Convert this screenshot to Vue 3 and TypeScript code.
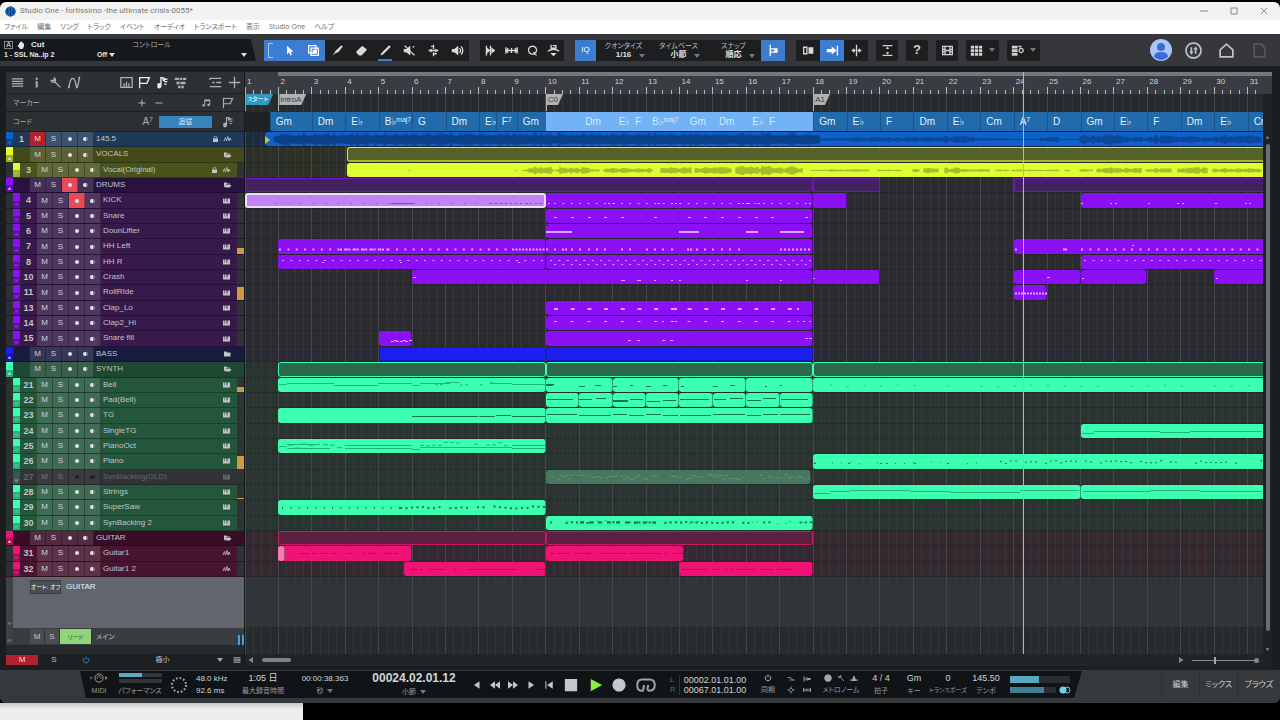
<script setup lang="ts">
import { h, ref } from 'vue'

const VIEW = 30.46
const END = 1 + VIEW
const pct = (bar: number) => ((bar - 1) / VIEW) * 100 + '%'
const span = (a: number, b: number) => ({ left: pct(a), width: ((b - a) / VIEW) * 100 + '%' })

type Glyph = { s?: string; f?: string }
const glyphs: Record<string, Glyph> = {
  cursor: { f: 'M5 2v10.5l2.5-2.3 1.7 3.8 1.8-.8-1.7-3.7H13z' },
  range: { s: 'M2 2h9v9H2zM5 5h9v9H5z', f: 'M7 7h5v5H7z' },
  knife: { f: 'M2 14l4-6 7-6.5 1.5 1.5L9 10l-3 1z' },
  eraser: { f: 'M2 9l6-6q1-1 2 0l4 3q1 1 0 2l-6 6H5l-3-3q-1-1 0-2z' },
  pen: { f: 'M2 14l1-3L12.500 1.500l2 2L5 13z' },
  mute: { s: 'M2 2l12 12M12 4l2-1M12 12l2 1', f: 'M1 6h3l5-4v12l-5-4H1z' },
  bend: { s: 'M2 8h12M8 1v5M8 10v5M5 3h3M8 12h4M5 6v4M11 6v4' },
  listen: { s: 'M10.500 5q2.500 3 0 6M12.500 3q4 5 0 10', f: 'M1 6h3l5-4v12l-5-4H1z' },
  play2: { s: 'M3 2v12M8 2v12', f: 'M3 4l5 4-5 4zM9 4l5 4-5 4z' },
  stretch: { s: 'M1 4v8M15 4v8M2 8h12M4 5L1.500 8 4 11M12 5l2.500 3L12 11M8 5v6' },
  q: { s: 'M8 2.500a5 5 0 1 0 .01 0M9 10l4 4' },
  macro: { s: 'M1 9q7-5 14 0M5 1v4h6V2H7', f: 'M4 11h8l-4 4z' },
  snap: { s: 'M4 1v14M4 6h9M4 10h9', f: 'M9 6h4v4H9z' },
  split: { s: 'M2 4h4v8H2z', f: 'M8 4h6v8H8zM10 8l3-2v4z' },
  follow: { s: 'M14 2v12', f: 'M1 6h6V3l6 5-6 5v-3H1z' },
  center: { s: 'M8 1v14M2 8h4M10 8h4', f: 'M4 5l3 3-3 3zM12 5L9 8l3 3z' },
  fit: { s: 'M2 2h12M2 14h12M8 4v2M8 10v2', f: 'M6 6l2-3 2 3zM6 10l2 3 2-3z' },
  film: { s: 'M2 3h12v10H2zM5 3v10M11 3v10M2 6.500h3M2 9.500h3M11 6.500h3M11 9.500h3M5 8h6' },
  grid: { f: 'M1 2h4v3.500H1zM6 2h4v3.500H6zM11 2h4v3.500h-4zM1 6.500h4V10H1zM6 6.500h4V10H6zM11 6.500h4V10h-4zM1 11h4v3.500H1zM6 11h4v3.500H6zM11 11h4v3.500h-4z' },
  panel: { s: 'M12.500 5.500a2.500 2.500 0 1 0 .01 0', f: 'M1 2h7v3.500H1zM1 6.500h7V10H1zM1 11h7v3.500H1zM9 2h4v2H9z' },
  menu: { s: 'M1 3.500h14M1 6.500h14M1 9.500h14M1 12.500h14' },
  info: { f: 'M7 2h2.500v2.500H7zM7 6h2.500v8H7z' },
  wrench: { s: 'M7 7l7 7M2 5.500h4.500V2.500Q9 4 7.500 7 5 9 2 5.500' },
  curve: { s: 'M1 14Q3 2 6 3t4 9 4-10', f: 'M0 12h2v3H0zM13 1h2v2h-2z' },
  keys: { s: 'M1 2h14v12H1zM5 9v5M8 7v7M11 9v5' },
  flag: { s: 'M2 15V2h12l-3 7H2' },
  chord: { s: 'M6 13V2h3M10 4h4M10 7h4M10 10h3', f: 'M2 12a2.500 2 0 1 0 4 0a2.500 2 0 1 0-4 0M8 2h3v4H8z' },
  arr: { f: 'M1 2h5v3H1zM7 2h3v3H7zM11 2h4v3h-4zM3 7h4v3H3zM8 7h6v3H8zM5 12h3v3H5zM9 12h3v3H9z' },
  list: { s: 'M1 3h14M1 13h14M4 8h3M9 8h6M1 3v2' },
  plus: { s: 'M8 1v14M1 8h14' },
  minus: { s: 'M1 8h14' },
  note: { s: 'M6 12V3h8v8', f: 'M2 12a2 2 0 1 0 4 0a2 2 0 1 0-4 0M10 11a2 2 0 1 0 4 0a2 2 0 1 0-4 0M6 3h8v2H6z' },
  midi: { f: 'M1 3h3v6h1V3h2v6h1V3h2v6h1V3h4v10H1z' },
  wave: { s: 'M1 12l3-7 2 7 3-9 2 9 2-6 2 5' },
  lock: { s: 'M5 7V4.500q3-4 6 0V7', f: 'M3 7h10v7H3z' },
  open: { f: 'M1 3h5l1 2h6v2H5l-2 5H1zM5 8h11l-3 5H3z' },
  shut: { f: 'M1 3h5l1 2h7v8H1z' },
  auto: { s: 'M2 13L6 4l4 8 4-9' },
  home: { s: 'M2 7.500L8 2l6 5.500V14H2z' },
  page: { s: 'M3 2h7l3 4v8H3z' },
  swap: { s: 'M8 1a7 7 0 1 0 .01 0M6 5v5M10 11V6', f: 'M4 9h4l-2 3zM8 7h4l-2-3z' },
  power: { s: 'M5 3.500a5.500 5.500 0 1 0 6 0M8 1v6' },
  back: { f: 'M12 2v12L3 8z' },
  rew: { f: 'M8 2v12L0 8zM16 2v12L8 8z' },
  ffwd: { f: 'M8 2v12l8-6zM0 2v12l8-6z' },
  fwd: { f: 'M4 2v12l9-6z' },
  start: { s: 'M3 2v12', f: 'M14 2v12L5 8z' },
  stop: { f: 'M1 1h14v14H1z' },
  play: { f: 'M2 1v14l13-7z' },
  rec: { f: 'M8 .5a7.500 7.500 0 1 0 .01 0' },
  loop: { s: 'M5.500 12.500H4Q1 12.500 1 8t4-4.500h6q4 0 4 4.500t-4 4.500Q8 12.500 10 8M6.500 8l-1 5' },
  pre: { s: 'M1 5h6l4 5h4M5 10h8' },
  punch: { s: 'M2 2v12M2 8h12M8 4v8', f: 'M9 6h6v4H9z' },
  gear: { s: 'M8 4.500a3.500 3.500 0 1 0 .01 0M8 1v3M8 12v3M1 8h3M12 8h3' },
  tri: { f: 'M8 2l5 12H3zM1 10h2v4H1zM13 10h2v4h-2z' },
  din: { s: 'M8 1.500a6.500 6.500 0 1 0 .01 0M8 3v3M4 8h2M10 8h2M5 5l1 1M11 5l-1 1' },
}
const Icon = (p: { name: string }) => {
  const g = glyphs[p.name]
  return h('svg', { viewBox: '0 0 16 16', 'aria-hidden': 'true' }, [
    g.s ? h('path', { d: g.s, fill: 'none', stroke: 'currentColor', 'stroke-width': 1.6 }) : null,
    g.f ? h('path', { d: g.f, fill: 'currentColor' }) : null,
  ])
}
Icon.props = ['name']

const menus = ['ファイル', '編集', 'ソング', 'トラック', 'イベント', 'オーディオ', 'トランスポート', '表示', 'Studio One', 'ヘルプ']
const tools = [['cursor', '矢印'], ['range', '範囲'], ['knife', '分割'], ['eraser', '消しゴム'], ['pen', 'ペイント'], ['mute', 'ミュート'], ['bend', 'ベンド'], ['listen', '試聴']]
const tools2 = [['play2', 'タブ'], ['stretch', 'ストレッチ'], ['q', 'クオンタイズ適用'], ['macro', 'マクロ']]

type Clip = [number, number, string?]
type Track = { n?: string; name: string; g: string; kind: 'top' | 'folder' | 'child' | 'idle'; icon: string; lock?: boolean; m?: boolean; r?: boolean; meter?: number; clips: Clip[] }
const tracks: Track[] = [
  { n: '1', name: '145.5', g: 'tempo', kind: 'top', icon: 'wave', lock: true, m: true, clips: [[1.6, END]] },
  { name: 'VOCALS', g: 'vocal', kind: 'folder', icon: 'open', clips: [[4.05, END]] },
  { n: '3', name: 'Vocal(Original)', g: 'vocal', kind: 'child', icon: 'wave', lock: true, clips: [[4.05, END]] },
  { name: 'DRUMS', g: 'drum', kind: 'folder', icon: 'open', r: true, clips: [[1, 18], [18, 20], [24, END]] },
  { n: '4', name: 'KICK', g: 'drum', kind: 'child', icon: 'midi', r: true, clips: [[1, 10, 'selected'], [10, 18], [18, 19], [26, END]] },
  { n: '5', name: 'Snare', g: 'drum', kind: 'child', icon: 'midi', clips: [[10, 18]] },
  { n: '6', name: 'DounLifter', g: 'drum', kind: 'child', icon: 'midi', clips: [[10, 18]] },
  { n: '7', name: 'HH Left', g: 'drum', kind: 'child', icon: 'midi', meter: 42, clips: [[2, 10], [10, 18], [24, END]] },
  { n: '8', name: 'HH R', g: 'drum', kind: 'child', icon: 'midi', clips: [[2, 10], [10, 18], [26, END]] },
  { n: '10', name: 'Crash', g: 'drum', kind: 'child', icon: 'midi', clips: [[6, 18], [18, 20], [24, 26], [26, 28], [30, END]] },
  { n: '11', name: 'RollRIde', g: 'drum', kind: 'child', icon: 'midi', meter: 90, clips: [[24, 25]] },
  { n: '13', name: 'Clap_Lo', g: 'drum', kind: 'child', icon: 'midi', clips: [[10, 18]] },
  { n: '14', name: 'Clap2_Hi', g: 'drum', kind: 'child', icon: 'midi', clips: [[10, 18]] },
  { n: '15', name: 'Snare fill', g: 'drum', kind: 'child', icon: 'midi', clips: [[5, 6], [10, 18]] },
  { name: 'BASS', g: 'bass', kind: 'folder', icon: 'shut', clips: [[5, 10], [10, 18]] },
  { name: 'SYNTH', g: 'synth', kind: 'folder', icon: 'open', clips: [[2, 10], [10, 18], [18, END]] },
  { n: '21', name: 'Bell', g: 'synth', kind: 'child', icon: 'midi', meter: 32, clips: [[2, 10], [10, 12], [12, 14], [14, 16], [16, 18], [18, END]] },
  { n: '22', name: 'Pad(Bell)', g: 'synth', kind: 'child', icon: 'midi', clips: [10, 11, 12, 13, 14, 15, 16, 17].map((b): Clip => [b, b + 1]) },
  { n: '23', name: 'TG', g: 'synth', kind: 'child', icon: 'midi', clips: [[2, 10], [10, 18]] },
  { n: '24', name: 'SingleTG', g: 'synth', kind: 'child', icon: 'midi', clips: [[26, END]] },
  { n: '25', name: 'PianoOct', g: 'synth', kind: 'child', icon: 'midi', clips: [[2, 10]] },
  { n: '26', name: 'Piano', g: 'synth', kind: 'child', icon: 'midi', meter: 90, clips: [[18, END]] },
  { n: '27', name: 'SynBacking(OLD)', g: 'synth', kind: 'idle', icon: 'midi', clips: [[10, 17.94, 'muted']] },
  { n: '28', name: 'Strings', g: 'synth', kind: 'child', icon: 'midi', meter: 10, clips: [[18, 26], [26, END]] },
  { n: '29', name: 'SuperSaw', g: 'synth', kind: 'child', icon: 'midi', clips: [[2, 10]] },
  { n: '30', name: 'SynBacking 2', g: 'synth', kind: 'child', icon: 'midi', clips: [[10, 18]] },
  { name: 'GUITAR', g: 'guitar', kind: 'folder', icon: 'open', clips: [[2, 10], [10, 18]] },
  { n: '31', name: 'Guitar1', g: 'guitar', kind: 'child', icon: 'wave', clips: [[2, 6], [2, 2.2, 'head'], [10, 14.13]] },
  { n: '32', name: 'Guitar1 2', g: 'guitar', kind: 'child', icon: 'wave', clips: [[5.75, 10], [14, 18]] },
]

const chords: [number, number, string, string?][] = [
  [1.74, 3, 'Gm'], [3, 4, 'Dm'], [4, 5, 'E♭'], [5, 6, 'B♭', 'maj7'], [6, 7, 'G'], [7, 8, 'Dm'], [8, 8.5, 'E♭'], [8.5, 9.13, 'F', '7'], [9.13, 10, 'Gm'],
  [10, 11, ''], [11, 12, 'Dm'], [12, 12.5, 'E♭'], [12.5, 13, 'F'], [13, 14.13, 'B♭', 'maj7'], [14.13, 15, 'Gm'], [15, 16, 'Dm'], [16, 16.5, 'E♭'], [16.5, 18, 'F'],
  [18, 19, 'Gm'], [19, 20, 'E♭'], [20, 21, 'F'], [21, 22, 'Dm'], [22, 23, 'E♭'], [23, 24, 'Cm'], [24, 25, 'A', '7'], [25, 26, 'D'], [26, 27, 'Gm'], [27, 28, 'E♭'], [28, 29, 'F'], [29, 30, 'Dm'], [30, 31, 'E♭'], [31, END, 'Cm'],
]
const markers: [number, string, string][] = [[1, 'スタート', 'go'], [2, 'introA', ''], [10, 'C0', ''], [18, 'A1', '']]
const bars = Array.from({ length: 31 }, (_, i) => i + 1)
const beats = Array.from({ length: 122 }, (_, i) => ({ bar: 1 + i / 4, main: i % 4 === 0 }))

/* Note strokes, in the coordinates of the arrangement canvas. */
const run = (a: number, b: number, step: number, y: number, w = 2) => {
  let d = ''
  for (let x = a; x < b; x += step) d += `M${x.toFixed(1)} ${y}h${w}`
  return d
}
const at = (y: number, w: number, xs: number[]) => xs.map((x) => `M${x} ${y}h${w}`).join('')
const seg = (list: [number, number, number][]) => list.map(([a, b, y]) => `M${a} ${y}H${b}`).join('')
const B = 8.355
const rnd = (i: number) => {
  const v = Math.sin(i * 12.9898) * 43758.5453
  return v - Math.floor(v)
}
const scatter = (a: number, b: number, step: number, y: number, dy: number, w: number, keep: number) => {
  let d = ''
  for (let x = a, i = a; x < b; x += step, i++) if (rnd(i) < keep) d += `M${x.toFixed(1)} ${(y + (rnd(i + 7) - 0.5) * dy).toFixed(1)}h${w}`
  return d
}
const wave = (y: number, parts: [number, number, number][]) => {
  let d = ''
  for (const [a, b, amp] of parts)
    for (let x = a; x < b; x += 1) {
      const e = Math.max(0.5, amp * (0.45 + 0.55 * rnd(Math.floor(x / 3))) * (0.7 + 0.3 * rnd(x)))
      d += `M${x} ${(y - e).toFixed(1)}V${(y + e).toFixed(1)}`
    }
  return d
}
const strokes: { c: string; d: string; w: number }[] = [
  { c: 'n-kick', w: 1, d: run(275, 545, 12.6, 203.5, 1) + run(490, 545, 5, 203.5) + seg([[391, 414, 203.5]]) },
  {
    c: 'n-drum', w: 1,
    d: run(554, 812, B, 203.5) + at(203.5, 2, [548, 608, 613, 658, 675, 742, 748, 758, 809, 1081, 1110, 1115, 1148, 1177, 1182, 1215, 1245, 1249]) +
      at(217.5, 3, [554, 571, 588, 604, 621, 654, 688, 704, 721, 738, 755, 771, 805]) +
      run(282, 546, B, 260.5) + at(262.5, 2, [322, 400, 518]) + run(550, 812, B, 260.5) + run(554, 812, B, 264.5) + run(1084, 1262, B, 260.5) +
      at(277.5, 3, [413, 1047]) + at(280.500, 4, [621, 637]) + at(280.5, 2, [654, 671, 679, 746, 780]) + at(278.5, 2, [813, 1082, 1216]) +
      run(554, 800, 16.7, 321.5, 3) + at(321.5, 2, [662, 671, 675, 797, 803, 809]) +
      at(340.500, 3, [628, 637, 662, 670]) + at(338.500, 3, [805, 809]) + at(341.5, 3, [391, 396, 400, 405]) + at(340.5, 3, [394, 403, 409]) + at(245.5, 2, [1132]),
  },
  {
    c: 'n-drum', w: 2,
    d: seg([[546, 572, 232], [679, 699, 232], [746, 758, 232], [780, 804, 232]]) + run(279, 512, B, 249.5, 2) + run(340, 390, 4.2, 249.5, 2) + run(512, 548, 3.4, 249.5, 2) +
      at(249.5, 2, [554, 562, 565, 571, 579, 588, 596, 604, 621, 629, 646, 654, 662, 671, 687, 690, 696, 704, 712, 721, 729, 738, 1015, 1063, 1065]) +
      run(780, 812, 4, 249.5) + run(1081, 1262, B, 249.5) + run(1015, 1046, 3, 293.5, 2) + run(554, 800, 16.7, 309, 4) + at(309, 2, [671, 675, 797]),
  },
  {
    c: 'n-synth', w: 1,
    d: seg([[279, 287, 384.5], [287, 334, 383.5], [334, 378, 385.5], [378, 412, 383.5], [412, 420, 385.5], [420, 450, 383.5], [446, 460, 382.5], [490, 512, 383.5], [512, 546, 384.5]]) +
      scatter(430, 512, 5, 384, 3, 3, 0.7) +
      seg([[279, 287, 446.5], [287, 320, 444.5], [287, 330, 448.5], [345, 412, 445.5], [345, 412, 448.5], [412, 420, 449.5], [420, 512, 447.5], [512, 546, 445.5], [512, 546, 448.5]]) +
      scatter(288, 345, 7, 446, 4, 5, 0.8) + scatter(420, 510, 6, 444, 4, 4, 0.8) +
      scatter(830, 1262, 16.7, 386, 2, 2, 0.8) + seg([[1082, 1094, 433.5], [1094, 1160, 431.5], [1160, 1190, 432.5], [1190, 1262, 431.5]]) +
      seg([[814, 830, 493.5], [830, 850, 491.5], [850, 910, 490.5], [910, 950, 491.5], [950, 1020, 492.5], [1020, 1079, 490.5], [1083, 1150, 491.5], [1150, 1200, 490.5], [1200, 1262, 491.5]]) +
      scatter(550, 812, 4.200, 522.5, 4, 2, 0.4),
  },
  {
    c: 'n-dark', w: 1,
    d: seg([[546, 554, 384.5], [546, 553, 385.5], [579, 585, 386.5], [595, 601, 385.5], [613, 617, 386.5], [630, 633, 385.5], [646, 651, 386.5], [663, 667, 385.5], [681, 684, 386.5], [713, 718, 386.5], [730, 735, 385.5], [765, 767, 386.5], [780, 782, 385.5]]) +
      seg([[547, 573, 399.5], [579, 592, 399.5], [596, 606, 398.5], [613, 628, 400.5], [613, 628, 401.5], [630, 643, 399.5], [647, 660, 401.5], [663, 676, 400.5], [680, 709, 399.5], [714, 726, 399.5], [730, 743, 398.5], [747, 761, 400.5], [763, 776, 398.5], [781, 808, 399.5]]) +
      seg([[412, 478, 416.5], [479, 495, 416.5], [496, 511, 415.5], [512, 546, 416.5], [547, 577, 414.5], [579, 611, 415.5], [613, 627, 414.5], [629, 644, 415.5], [646, 661, 414.5], [663, 678, 415.5], [680, 711, 415.5], [713, 745, 414.5], [747, 761, 415.5], [763, 778, 414.5], [780, 810, 414.5]]) +
      at(463.5, 2, [814, 848, 880, 886, 914, 947]) + scatter(980, 1262, 5, 462, 3, 2, 0.6) + scatter(814, 980, 9, 463, 2, 1, 0.7),
  },
  { c: 'n-dark', w: 2, d: run(282, 400, B, 508, 1) + scatter(400, 546, 5.5, 507.5, 2, 2, 0.8) + scatter(550, 812, 5.200, 522.5, 1, 2, 0.75) + run(580, 660, 9, 522.5, 4) },
  { c: 'n-muted', w: 1, d: scatter(550, 808, 2.5, 477, 5, 3, 0.7) },
  { c: 'n-vocal', w: 1, d: wave(170.5, [[409, 411, 0.5], [515, 517, 0.5], [523, 528, 1], [528, 553, 4], [553, 560, 1.500], [560, 590, 4], [590, 600, 1.5], [604, 630, 3], [630, 653, 2.500], [661, 692, 4], [695, 703, 3], [703, 732, 4.5], [736, 782, 5], [782, 803, 4.5], [811, 830, 1], [830, 870, 1.5], [878, 902, 1], [913, 920, 2], [924, 939, 3], [945, 960, 3.500], [960, 990, 1.500], [996, 1010, 1], [1012, 1060, 1], [1065, 1070, 1], [1080, 1093, 1.5], [1097, 1142, 3], [1146, 1172, 2.5], [1178, 1208, 4], [1213, 1262, 2.5]]) },
  { c: 'n-tempo', w: 1, d: wave(139.5, [[274, 280, 5], [280, 818, 7.5], [818, 850, 2], [850, 905, 3], [905, 945, 3], [945, 975, 4], [975, 1010, 1.5], [1010, 1040, 1], [1040, 1060, 3], [1060, 1080, 1], [1080, 1125, 5.5], [1125, 1147, 3], [1147, 1195, 5], [1195, 1215, 3], [1215, 1262, 5]]) },
  { c: 'n-guitar', w: 1, d: scatter(300, 398, 2, 553.5, 0, 3, 0.5) + scatter(548, 590, 2, 553.5, 0, 3, 0.6) + scatter(596, 682, 2, 553.5, 0, 3, 0.8) + scatter(408, 455, 2, 569.5, 0, 3, 0.6) + scatter(468, 516, 2, 569.5, 0, 3, 0.8) + scatter(535, 545, 2, 569.5, 0, 3, 0.8) + scatter(682, 790, 2, 569.5, 0, 3, 0.6) },
]

const quantize = ref('1/16')
const timebase = ref('小節')
const snap = ref('順応')
const moves = [['back', '戻る', 'sm'], ['rew', '巻き戻し', 'sm'], ['ffwd', '早送り', 'sm'], ['fwd', '進む', 'sm'], ['start', '先頭へ', 'sm'], ['stop', '停止', 'st'], ['play', '再生', 'pl'], ['rec', '録音', 'rc'], ['loop', 'ループ', 'lp']]
</script>

<template>
  <div class="desk">
    <div class="window">
      <header class="title">
        <svg class="logo" viewBox="0 0 16 16" aria-hidden="true"><path d="M8 0l6 3 2 5-2 5-6 3-6-3-2-5 2-5z" fill="#1268b8" /><path d="M4 4v6M8 3v4M8 9v5M12 5v7" stroke="#082d60" stroke-width="1.5" /></svg>
        <h1>Studio One - fortissimo -the ultimate crisis-0055*</h1>
        <div class="winbtns">
          <button aria-label="最小化"><svg viewBox="0 0 8 8"><path d="M0 4h8" /></svg></button>
          <button aria-label="最大化"><svg viewBox="0 0 8 8"><path d="M1 1h6v6H1z" /></svg></button>
          <button aria-label="閉じる"><svg viewBox="0 0 8 8"><path d="M1 1l6 6M7 1L1 7" /></svg></button>
        </div>
      </header>
      <nav class="menu"><button v-for="m in menus" :key="m">{{ m }}</button></nav>

      <div class="toolbar">
        <div class="plugin">
          <div class="line"><span class="abox">A</span><svg class="hand" viewBox="0 0 16 16"><path d="M4 8V4h2V2h2V1h2v2h2v2h2v6l-3 5H6L1 9l1-1z" fill="currentColor" /></svg><b>Cut</b><span class="ctl">コントロール</span></div>
          <div class="line"><b class="ssl">1 - SSL Na..ip 2</b><button class="offbtn">Off <i class="dn"></i></button><button class="more" aria-label="メニュー"><i class="dn"></i></button></div>
        </div>
        <div class="group first">
          <span class="bracket"></span>
          <button v-for="([i, l], k) in tools" :key="i" :aria-label="l" :class="{ on: k < 2, marked: k === 4 }"><Icon :name="i" class="ic" /></button>
        </div>
        <div class="group narrow"><button v-for="[i, l] in tools2" :key="i" :aria-label="l"><Icon :name="i" class="ic" /></button></div>
        <div class="group">
          <button class="on iq">IQ</button>
          <label class="pick"><span>クオンタイズ</span><select v-model="quantize"><option>1/16</option></select><i class="dn"></i></label>
          <label class="pick"><span>タイムベース</span><select v-model="timebase"><option>小節</option></select><i class="dn"></i></label>
          <label class="pick"><span>スナップ</span><select v-model="snap"><option>順応</option></select><i class="dn"></i></label>
          <button class="on" aria-label="スナップ切替"><Icon name="snap" class="ic" /></button>
        </div>
        <div class="group">
          <button aria-label="自動スクロール"><Icon name="split" class="ic" /></button>
          <button class="on" aria-label="追従"><Icon name="follow" class="ic" /></button>
          <button aria-label="中央"><Icon name="center" class="ic" /></button>
        </div>
        <div class="singles">
          <button aria-label="高さ"><Icon name="fit" class="ic" /></button>
          <button class="help">?</button>
          <button aria-label="ビデオ"><Icon name="film" class="ic" /></button>
          <button class="wide" aria-label="グリッド"><Icon name="grid" class="ic" /><i class="dn"></i></button>
          <button class="wide" aria-label="パネル"><Icon name="panel" class="ic" /><i class="dn"></i></button>
        </div>
        <div class="account">
          <button aria-label="アカウント"><svg class="face" viewBox="0 0 22 22"><circle cx="11" cy="11" r="11" fill="#a9c5f8" /><circle cx="11" cy="8" r="4" fill="#3d6bd5" /><path d="M4 18q0-5 7-5t7 5q-7 6-14 0" fill="#3d6bd5" /></svg></button>
          <button aria-label="転送"><Icon name="swap" class="big" /></button>
          <button aria-label="ホーム"><Icon name="home" class="big" /></button>
          <button class="dim" aria-label="ページ"><Icon name="page" class="big" /></button>
        </div>
      </div>

      <main class="main">
        <section class="panel">
          <div class="ptools">
            <button aria-label="リスト"><Icon name="menu" class="ic" /></button><button aria-label="情報"><Icon name="info" class="ic" /></button><button aria-label="設定"><Icon name="wrench" class="ic" /></button><button aria-label="オートメーション"><Icon name="curve" class="ic" /></button>
            <span class="mid">
              <button aria-label="ルーラー"><Icon name="keys" class="ic" /></button><button class="lit" aria-label="マーカー"><Icon name="flag" class="ic" /></button><button class="lit" aria-label="コード"><Icon name="chord" class="ic" /></button><button aria-label="アレンジ"><Icon name="arr" class="ic" /></button>
            </span>
            <button aria-label="レイアウト"><Icon name="list" class="ic" /></button><button aria-label="追加"><Icon name="plus" class="ic" /></button>
          </div>
          <div class="lane marker"><span>マーカー</span><button aria-label="追加"><Icon name="plus" class="xs" /></button><button aria-label="削除"><Icon name="minus" class="xs" /></button><Icon name="note" class="nt" /><Icon name="flag" class="md" /></div>
          <div class="lane"><span>コード</span><em>A<sup>7</sup></em><button class="track-on">追従</button><Icon name="chord" class="md" /></div>
          <ol class="tracks">
            <li v-for="t in tracks" :key="t.name + t.n" :class="['track', t.g, t.kind]">
              <span class="strip"><Icon v-if="t.kind === 'folder'" name="fwd" class="tiny up" /><Icon v-else name="auto" class="tiny" /></span>
              <span class="num">{{ t.n }}</span>
              <button :class="{ red: t.m }">M</button><button>S</button><button :class="{ rec: t.r }" aria-label="録音待機"><i class="dot"></i></button><button aria-label="モニター"><i class="half"></i></button>
              <span class="name">{{ t.name }}</span>
              <Icon v-if="t.lock" name="lock" class="ti" /><Icon :name="t.icon" class="ti last" />
              <span v-if="t.kind === 'child' || t.kind === 'idle'" class="meter"><i v-if="t.meter" :style="{ height: t.meter + '%' }"></i></span>
            </li>
          </ol>
          <div class="detail"><span class="edge"><Icon name="auto" class="tiny" /></span><button>オート: オフ</button><b>GUITAR</b></div>
          <div class="master"><span class="edge"><Icon name="auto" class="tiny" /></span><button>M</button><button>S</button><button class="read">リード</button><span class="mname">メイン</span><i class="lvl"></i></div>
          <div class="spare"></div>
          <div class="foot"><button class="red">M</button><button>S</button><button class="blue" aria-label="有効"><Icon name="power" class="xs" /></button><button class="size">極小</button><i class="dn"></i><Icon name="menu" class="xs" /></div>
        </section>

        <section class="timeline">
          <div class="ruler">
            <i class="loopbar" :style="{ left: pct(2) }"></i>
            <svg class="ticks"><line v-for="b in beats" :key="b.bar" :x1="pct(b.bar)" :x2="pct(b.bar)" :y1="b.main ? 15 : 18" y2="22" /></svg>
            <span v-for="b in bars" :key="b" :style="{ left: pct(b) }">{{ b }}</span>
          </div>
          <div class="mlane">
            <svg class="gridlines"><line v-for="b in beats" :key="b.bar" :class="{ main: b.main }" :x1="pct(b.bar)" :x2="pct(b.bar)" y1="0" y2="100%" /></svg>
            <span v-for="m in markers" :key="m[1]" :class="['mark', m[2]]" :style="{ left: pct(m[0]) }"><b>{{ m[1] }}</b></span>
          </div>
          <div class="clane"><span v-for="(c, i) in chords" :key="i" :class="['chord', { pale: c[0] >= 10 && c[0] < 18 }]" :style="span(c[0], c[1])">{{ c[2] }}<sup v-if="c[3]">{{ c[3] }}</sup></span></div>
          <div class="canvas">
            <div v-for="t in tracks" :key="t.name + t.n" :class="['row', t.g]"></div>
            <svg class="gridlines"><line v-for="b in beats" :key="b.bar" :class="{ main: b.main }" :x1="pct(b.bar)" :x2="pct(b.bar)" y1="0" y2="100%" /></svg>
            <div class="cliprows">
              <div v-for="t in tracks" :key="t.name + t.n" :class="['cliprow', t.g, t.kind]"><i v-for="(c, i) in t.clips" :key="i" :class="['clip', c[2], { open: c[1] === END }]" :style="span(c[0], c[1])"></i></div>
            </div>
            <svg class="notes" viewBox="245 132 1018 445" preserveAspectRatio="none">
              <path class="loud" d="M275 136.500l6-1H820v8H281l-6-1z" />
              <path class="spark" d="M265 136l5 4-5 4z" />
              <path v-for="(s, i) in strokes" :key="i" :class="s.c" :stroke-width="s.w" :d="s.d" />
            </svg>
          </div>
          <div class="below d1"><svg class="gridlines"><line v-for="b in beats" :key="b.bar" :class="{ main: b.main }" :x1="pct(b.bar)" :x2="pct(b.bar)" y1="0" y2="100%" /></svg></div>
          <div class="below d2"><svg class="gridlines"><line v-for="b in beats" :key="b.bar" :class="{ main: b.main }" :x1="pct(b.bar)" :x2="pct(b.bar)" y1="0" y2="100%" /></svg></div>
          <div class="hscroll"><Icon name="back" class="xs" /><i class="thumb"></i><Icon name="fwd" class="xs far" /><input type="range" min="0" max="100" value="36" aria-label="ズーム" /><i class="end"></i></div>
          <i class="playhead" :style="{ left: pct(24.28) }"></i>
        </section>
        <aside class="vscroll"><i class="cap"></i><Icon name="fwd" class="tiny up" /><i class="vthumb"></i><Icon name="fwd" class="tiny down" /></aside>
      </main>

      <footer class="transport">
        <div class="deck">
          <div class="cell w34"><span class="midi"><i></i><Icon name="din" class="sm" /><i class="hot"></i></span><small>MIDI</small></div>
          <div class="cell w48"><span class="perf"><i class="p"></i><i></i></span><small>パフォーマンス</small></div>
          <div class="cell w30"><svg class="ring" viewBox="0 0 18 18"><circle cx="9" cy="9" r="7" /></svg></div>
          <div class="cell w42 left"><span>48.0 kHz</span><span>92.6 ms</span></div>
          <div class="cell w54"><span>1:05 日</span><small>最大録音時間</small></div>
          <div class="cell w70"><span>00:00:38.363</span><small>秒 <i class="dn"></i></small></div>
          <div class="cell w108"><strong>00024.02.01.12</strong><small>小節 <i class="dn"></i></small></div>
          <div class="moves"><button v-for="[i, l, c] in moves" :key="i" :class="c" :aria-label="l"><Icon :name="i" class="mv" /></button></div>
          <div class="loc"><div class="lr"><b>L</b><b>R</b></div><div class="nums"><span>00002.01.01.00</span><span>00067.01.01.00</span></div></div>
          <div class="cell w24"><Icon name="power" class="xs" /><small>同期</small></div>
          <div class="quad"><Icon name="pre" class="xs" /><Icon name="punch" class="xs" /><Icon name="gear" class="xs" /><Icon name="stretch" class="xs" /></div>
          <div class="cell w46"><span class="trio"><Icon name="rec" class="xs" /><Icon name="wrench" class="xs" /><Icon name="tri" class="xs" /></span><small>メトロノーム</small></div>
          <div class="cell w34"><span>4 / 4</span><small>拍子</small></div>
          <div class="cell w32"><span>Gm</span><small>キー</small></div>
          <div class="cell w36"><span>0</span><small>トランスポーズ</small></div>
          <div class="cell w40"><span>145.50</span><small>テンポ</small></div>
          <div class="levels"><i class="a"></i><i class="b"></i><svg viewBox="0 0 12 8"><circle cx="4" cy="4" r="3.500" fill="#6fd0e6" /><circle cx="8" cy="4" r="3" fill="none" stroke="#6fd0e6" /></svg></div>
        </div>
        <nav class="views"><button>編集</button><button>ミックス</button><button>ブラウズ</button></nav>
      </footer>
    </div>
    <div class="backdrop"><i></i></div>
  </div>
</template>

<style>
body { margin: 0; background: #000; }
</style>

<style scoped>
.desk { display: flex; flex-direction: column; height: 100vh; min-height: 600px; background: #000; color: #c3c6c8; font: 8px/10px "Liberation Sans", "Noto Sans CJK JP", sans-serif; overflow: hidden; }
.desk *, .desk *::before { box-sizing: border-box; }
button, select { font: inherit; color: inherit; background: none; border: 0; padding: 0; margin: 0; }
.desk * { font-feature-settings: "palt"; }
button { display: flex; align-items: center; justify-content: center; white-space: nowrap; }
svg { display: block; flex: none; }
.ic { width: 13px; height: 13px; }
.xs { width: 8px; height: 8px; }
.sm { width: 10px; height: 10px; }
.md { width: 14px; height: 12px; }
.big { width: 17px; height: 17px; }
.tiny { width: 5px; height: 5px; }
.up { transform: rotate(-90deg); }
.down { transform: rotate(90deg); }
.dn { display: inline-block; border: 3px solid transparent; border-top: 4px solid #a3a6a8; border-bottom: 0; }
.window { flex: 1; display: flex; flex-direction: column; min-height: 0; background: #1b1e20; border-radius: 6px; margin-top: 2px; overflow: hidden; }
.title { display: flex; align-items: center; height: 18px; background: #f3f2f2; color: #77797b; padding: 0 12px 0 5px; }
.logo { width: 11px; height: 11px; margin-right: 4px; }
.title h1 { margin: 0; font: 8px/14px Roboto, sans-serif; }
.winbtns { margin-left: auto; display: flex; gap: 22px; }
.winbtns svg { width: 8px; height: 8px; fill: none; stroke: #8a8a8a; }
.menu { display: flex; align-items: center; gap: 9px; height: 14px; background: #fff; color: #6c6e70; padding-left: 4px; font: 7px/12px "Open Sans", "Noto Sans CJK JP", sans-serif; }
.toolbar { display: flex; align-items: center; height: 32px; background: #35373a; padding-right: 4px; margin-bottom: 6px; }
.plugin { width: 256px; height: 22px; background: #15191d; clip-path: polygon(0 0, 98% 0, 100% 100%, 0 100%); padding: 1px 4px; color: #e3e5e6; }
.line { display: flex; align-items: center; height: 10px; }
.abox { border: 1px solid #888; width: 9px; height: 8px; font-size: 7px; line-height: 6px; text-align: center; }
.hand { width: 8px; height: 8px; margin: 0 6px 0 4px; }
.ctl { margin-left: 88px; color: #a5a8aa; font-size: 7px; }
.ssl { width: 93px; font-size: 7px; }
.offbtn { gap: 2px; font-weight: bold; font-size: 7px; }
.offbtn .dn, .more .dn { border-top-color: #dfe1e2; }
.more { margin-left: auto; margin-right: 5px; }
.group { display: flex; align-items: stretch; height: 21px; background: #1c1e20; margin-right: 11px; border-radius: 1px; color: #d8dadb; }
.group + .singles { margin-left: -3px; }
.first { margin-left: 8px; }
.group button { width: 24px; position: relative; }
.narrow button { width: 21px; }
.group .iq { width: 21px; }
.group .on { background: #3c7dd2; color: #fff; }
.marked::after { content: ""; position: absolute; left: 5px; right: 5px; bottom: 0; height: 2px; background: #3c7dd2; }
.bracket { width: 13px; background: #3c7dd2; padding: 3px 4px; display: flex; }
.bracket::before { content: ""; flex: 1; border: 1px solid #a6caf5; border-right: 0; }
.pick { position: relative; display: flex; flex-direction: column; align-items: center; width: 55px; color: #bcbfc1; padding-top: 1px; }
.pick span { font-size: 7px; line-height: 9px; }
.pick select { appearance: none; width: 40px; height: 11px; text-align: center; font-weight: bold; font-size: 8px; line-height: 10px; color: #dfe1e2; }
.pick .dn { position: absolute; right: 6px; bottom: 3px; border-top-color: #777; }
.singles { display: flex; gap: 8px; }
.singles button { width: 22px; height: 21px; background: #1c1e20; border-radius: 2px; color: #cfd1d2; }
.singles .wide { width: 33px; gap: 6px; }
.wide .dn { border-top-color: #777; }
.singles .help { font-size: 13px; font-weight: bold; }
.account { display: flex; margin-left: auto; color: #bfc2c4; }
.account button { width: 33px; }
.account .dim { color: #55585b; }
.face { width: 22px; height: 22px; }

.main { flex: 1; display: flex; padding: 0 8px 0 6px; min-height: 0; }
.panel { width: 239px; display: flex; flex-direction: column; background: #2c3033; border-right: 1px solid #15181a; }
.ptools { display: flex; height: 22px; padding-left: 2px; color: #aeb1b3; background: #2e3134; border-bottom: 1px solid #1d2022; }
.ptools button { width: 19px; }
.mid { display: flex; margin: 0 17px 0 33px; }
.mid button { width: 18px; }
.mid .lit { color: #eceeef; }
.lane { display: flex; align-items: center; height: 20px; padding: 0 9px 0 7px; color: #aaadaf; border-bottom: 1px solid #1d2022; }
.lane.marker { height: 18px; }
.lane > span { flex: 1; font-size: 7px; }
.lane em { font-style: normal; font-size: 10px; margin-right: 6px; }
sup { font-size: 7px; line-height: 0; vertical-align: 3px; }
.marker button { width: 17px; color: #d6d8d9; }
.nt { width: 10px; height: 10px; margin: 0 10px 0 34px; }
.track-on { width: 53px; height: 12px; background: #3784bd; color: #dcecf7; margin-right: 9px; font-size: 7px; }
.tracks { flex: 1; display: flex; flex-direction: column; list-style: none; margin: 0; padding: 0; min-height: 0; }
.track { flex: 1; display: flex; align-items: stretch; min-height: 0; border-bottom: 1px solid rgba(0, 0, 0, .28); color: #c2c4c6; background: var(--bg); }
.tempo { --c: #0f62cc; --bg: #1f3a59; --fold: #1f3a59; --row: #1c2c3a; }
.vocal { --c: #e0ff33; --bg: #49541c; --fold: #414a18; --row: #2c3027; }
.drum { --c: #8b10f5; --bg: #371a4b; --fold: #2a1240; --row: #2c2b30; }
.bass { --c: #1c1ff0; --bg: #181c40; --fold: #171b3e; --row: #292c34; }
.synth { --c: #3dffb2; --bg: #24563c; --fold: #1d4833; --row: #2a3430; }
.guitar { --c: #f01274; --bg: #471530; --fold: #3a0c25; --row: #33292e; }
.track.folder { background: var(--fold); }
.track.idle { background: #303235; color: #64676a; }
.strip { flex: none; width: 7px; background: linear-gradient(transparent 52%, rgba(0, 0, 0, .3) 52%), var(--c); display: flex; align-items: flex-end; justify-content: center; padding-bottom: 1px; color: rgba(255, 255, 255, .7); }
.child .strip, .idle .strip { box-shadow: -7px 0 #2c3033; }
.child, .idle { padding-left: 7px; }
.cliprow.child, .cliprow.idle { padding-left: 0; }
.child .strip .tiny, .top .strip .tiny { opacity: .5; }
.idle .strip { background: #35594b; }
.num { flex: none; width: 17px; text-align: center; font-weight: bold; font-size: 9px; line-height: 14px; }
.track button { flex: none; width: 16px; background: rgba(255, 255, 255, .13); border-right: 1px solid rgba(0, 0, 0, .3); color: #d0d2d3; }
.idle button { background: rgba(255, 255, 255, .05); color: #73767a; }
.track button.red, .foot .red { background: #b3202e; color: #f3dcdc; }
.track button.rec { background: #e84a56; }
.dot { width: 4px; height: 4px; border-radius: 50%; background: #e2e4e5; }
.half { width: 5px; height: 4px; border-radius: 2px; background: linear-gradient(90deg, #e2e4e5 55%, #85888a 55%); }
.idle .dot, .idle .half { background: #222; }
.name { line-height: 14px; padding-left: 2px; flex: 1; white-space: nowrap; }
.ti { width: 9px; height: 8px; align-self: center; margin-right: 3px; }
.last { margin-right: 6px; }
.top .last, .folder .last { margin-right: 12px; }
.meter { width: 7px; background: #303336; display: flex; align-items: flex-end; }
.meter i { width: 100%; background: #cd9a3d; }
.detail { display: flex; align-items: flex-start; height: 51px; background: #62666c; color: #f1f2f3; }
.edge { align-self: stretch; width: 7px; background: #3e4247; display: flex; align-items: flex-end; justify-content: center; color: #999; padding-bottom: 2px; }
.detail button { width: 31px; height: 14px; margin: 3px 0 0 17px; background: #4a4e53; border: 1px solid #3a3d41; font-size: 6px; }
.detail b { margin: 5px 0 0 5px; font-weight: normal; }
.master { display: flex; align-items: center; height: 17px; background: #393d40; }
.master .edge { margin-right: 17px; }
.master button { width: 15px; height: 15px; background: #4b4e51; border-right: 1px solid #303336; }
.master .read { width: 32px; background: #92d47b; color: #2f5a25; font-size: 6px; }
.mname { margin-left: 4px; flex: 1; font-size: 7px; }
.lvl { width: 6px; height: 10px; align-self: flex-end; background: linear-gradient(90deg, #4aa0d8 2px, #234 2px, #234 4px, #4aa0d8 4px); }
.spare { height: 9px; background: #272a2d; }
.foot { display: flex; align-items: center; height: 12px; background: #1d2022; padding-right: 3px; }
.foot button { width: 32px; height: 10px; }
.foot .blue { color: #3f90dd; }
.foot .size { flex: 1; padding-left: 6px; font-size: 7px; }
.foot .dn { margin-right: 10px; }

.timeline { flex: 1; position: relative; display: flex; flex-direction: column; min-width: 0; }
.ruler { position: relative; height: 22px; background: #393c43; }
.loopbar { position: absolute; top: 0; right: -9px; height: 4px; background: #75777a; }
.ticks, .gridlines, .notes { position: absolute; inset: 0; width: 100%; height: 100%; overflow: hidden; }
.ticks line { stroke: #b8babd; shape-rendering: crispEdges; }
.ruler span { position: absolute; top: 5px; padding-left: 2px; color: #d0d2d4; }
.gridlines line { stroke: #34383a; shape-rendering: crispEdges; }
.gridlines line.main { stroke: #43484a; }
.mlane { position: relative; height: 18px; background: #272b2e; }
.mark { position: absolute; top: 0; height: 17px; border-left: 1px solid #b3b5b6; color: #3b3d3f; }
.mark b { display: block; font-weight: normal; background: #b0b2b3; height: 11px; line-height: 11px; padding: 0 5px 0 1px; clip-path: polygon(0 0, 100% 0, calc(100% - 5px) 100%, 0 100%); }
.mark.go { border-color: #52b2d4; color: #fff; }
.mark.go b { background: #3299bd; font-size: 6px; }
.clane { position: relative; height: 20px; background: #1f2326; overflow: hidden; }
.chord { position: absolute; top: 0; height: 19px; background: #216aab; border-left: 1px solid #1b5588; padding-left: 5px; font-size: 10px; line-height: 19px; color: #e6f0f8; white-space: nowrap; overflow: hidden; font-family: "Liberation Sans", "DejaVu Sans", sans-serif; }
.chord.pale { background: #71b3f4; border-color: #71b3f4; color: #d9ebfc; }
.canvas { position: relative; flex: 1; display: flex; flex-direction: column; min-height: 0; overflow: hidden; background: #2b2d30; }
.row { flex: 1; background: var(--row); border-bottom: 1px solid rgba(0, 0, 0, .18); }
.cliprows { position: absolute; inset: 0; display: flex; flex-direction: column; }
.cliprow { position: relative; flex: 1; }
.clip { position: absolute; top: 0; bottom: 1px; background: var(--c); border-radius: 3px; border-right: 1px solid rgba(0, 0, 0, .35); }
.clip.open { border-top-right-radius: 0; border-bottom-right-radius: 0; border-right: 0; }
.folder .clip { border: 1px solid var(--c); background: #42235f; }
.drum.folder .clip { border-color: #7412cf; }
.folder .clip.open { border-right: 0; }
.vocal.folder .clip { background: #54622a; border-color: #d6f03a; border-bottom: 2px solid #9fbd2a; }
.synth.folder .clip { background: #2c684c; }
.guitar.folder .clip { background: #5c2040; border-color: #d01765; }
.bass.folder .clip { background: #1c1ff0; border-color: #171ac0; }
.clip.selected { background: #bf83f4; border: 2px solid #f0dcfb; }
.clip.muted { background: #48775f; }
.clip.head { background: #f77bb8; }
.notes path { fill: none; }
.notes .loud { fill: #0b408c; }
.notes .spark { fill: #b8c93a; }
.n-kick { stroke: #8448bd; }
.n-drum { stroke: #dca8ff; }
.n-synth { stroke: #20b878; }
.n-dark { stroke: #12784a; }
.n-muted { stroke: #5d9279; }
.n-vocal { stroke: #93a824; }
.n-tempo { stroke: #0b408c; }
.n-guitar { stroke: #b00c55; }
.below { position: relative; }
.d1 { height: 51px; background: #303538; border-bottom: 1px solid #282c2f; }
.d2 { height: 26px; background: #272b2e; }
.hscroll { display: flex; align-items: center; height: 12px; padding: 0 4px 0 2px; color: #85888a; background: #212528; }
.thumb { width: 29px; height: 4px; border-radius: 2px; background: #808385; margin-left: 7px; }
.far { margin-left: auto; margin-right: 7px; }
.hscroll input { appearance: none; width: 62px; height: 8px; margin: 0; background: linear-gradient(#85888a, #85888a) center / 100% 1px no-repeat; }
.hscroll input::-webkit-slider-thumb { appearance: none; width: 2px; height: 7px; background: #a6a8aa; }
.end { width: 5px; height: 5px; border-radius: 50%; background: #85888a; }
.playhead { position: absolute; top: 0; bottom: 12px; width: 1px; background: #b4b7b9; }
.vscroll { width: 9px; display: flex; flex-direction: column; align-items: center; background: #1e2224; color: #85888a; padding-bottom: 14px; }
.cap { align-self: stretch; height: 22px; background: #393c43; border-top: 4px solid #75777a; margin-bottom: 41px; }
.vthumb { flex: 1; width: 4px; border-radius: 2px; background: #6d7072; margin: 4px 0 16px; }

.transport { display: flex; height: 37px; padding: 1px 0 5px; background: #35393c; border-top: 4px solid #1c1f21; justify-content: space-between; }
.deck { display: flex; margin-left: 80px; padding: 0 8px 0 2px; background: #111416; clip-path: polygon(0 0, 100% 0, calc(100% - 8px) 100%, 6px 100%); height: 27px; }
.cell { display: flex; flex-direction: column; align-items: center; justify-content: space-evenly; color: #d3d5d6; white-space: nowrap; flex: none; }
.cell span { font-size: 9px; line-height: 11px; }
.cell small { font-size: 7px; line-height: 11px; color: #96999b; }
.cell.left { align-items: flex-start; padding-left: 2px; }
.cell.left span { font-size: 8px; }
.cell .dn { border-top-color: #777; margin-left: 2px; }
.cell strong { font-size: 12px; line-height: 13px; }
.w24 { width: 24px; } .w30 { width: 30px; } .w32 { width: 32px; } .w34 { width: 34px; } .w36 { width: 36px; } .w40 { width: 40px; } .w42 { width: 42px; } .w46 { width: 46px; } .w48 { width: 48px; } .w54 { width: 54px; } .w70 { width: 70px; } .w108 { width: 108px; }
.w70 span { font-size: 8px; }
.w36 small { font-size: 6px; }
.midi { display: flex; align-items: center; gap: 1px; }
.midi .sm { color: #999; }
.midi i { border: 2px solid transparent; border-left: 3px solid #555; border-right: 0; }
.midi .hot { border-left-color: #e0603a; }
.perf { display: flex; flex-direction: column; gap: 2px; }
.perf i { width: 43px; height: 4px; background: #303538; }
.perf .p { background: linear-gradient(90deg, #5da9c8 54%, #303538 54%); }
.ring { width: 18px; height: 18px; fill: none; stroke: #aeb0b2; stroke-width: 2; stroke-dasharray: 1.700 2; }
.moves { display: flex; align-items: center; color: #c5c7c8; }
.moves .sm { width: 18px; height: 20px; }
.sm .mv { width: 10px; height: 10px; }
.moves .st { width: 26px; }
.moves .pl { width: 24px; color: #8af03e; }
.moves .rc { width: 22px; }
.moves .lp { width: 32px; color: #a0a3a5; }
.st .mv, .pl .mv, .rc .mv { width: 14px; height: 14px; }
.lp .mv { width: 22px; height: 20px; }
.loc { width: 94px; display: flex; align-items: center; padding-left: 8px; gap: 4px; font-size: 9px; line-height: 10px; color: #d3d5d6; }
.lr, .nums { display: flex; flex-direction: column; }
.lr { color: #35708f; border-right: 1px solid #33383b; padding-right: 3px; font-size: 8px; }
.lr b { font-weight: normal; }
.quad { width: 38px; display: grid; grid-template-columns: 8px 8px; gap: 3px 8px; place-content: center; color: #a4a7a9; }
.trio { display: flex; gap: 5px; color: #a4a7a9; }
.levels { width: 68px; padding: 5px 4px; position: relative; display: flex; flex-direction: column; gap: 4px; }
.levels .a { height: 7px; background: linear-gradient(90deg, #5aa7c0 48%, #2a2e31 48%); }
.levels .b { height: 7px; width: 46px; background: linear-gradient(90deg, #3f8097 74%, #2a2e31 74%); }
.levels svg { position: absolute; right: 3px; bottom: 4px; width: 12px; height: 8px; }
.views { display: flex; color: #d0d2d3; font-size: 8px; }
.views button { width: 38px; border-left: 1px solid #2d3033; }
.views button:last-child { width: 43px; }
.backdrop { height: 17px; }
.backdrop i { display: block; width: 303px; height: 17px; background: linear-gradient(#c8c8c8, #eee 6px); }
</style>
